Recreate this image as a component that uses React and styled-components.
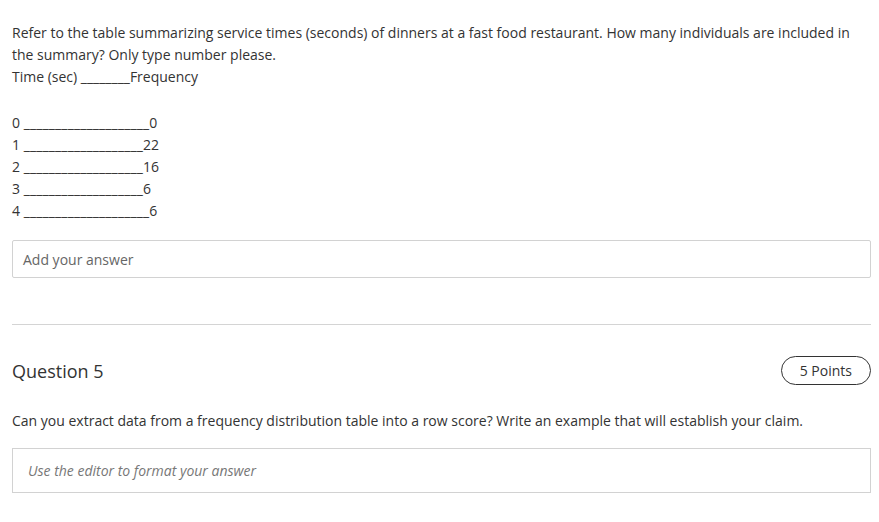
import React from "react";
import styled, { createGlobalStyle } from "styled-components";

const Global = createGlobalStyle`
  html, body { margin: 0; padding: 0; background: #fff; }
  body { font-family: "Open Sans", "Liberation Sans", sans-serif; color: #333; }
`;

const Page = styled.div`
  padding: 22px 8px 30px 12px;
`;

const Prompt = styled.div`
  font-size: 14px;
  line-height: 22px;
  color: #333;
`;

const Table = styled.div`
  margin-top: 24px;
  font-size: 14px;
  line-height: 22px;
  color: #333;
`;

const Row = styled.div`
  white-space: pre;
`;

const Rule = styled.span`
  letter-spacing: 0.15px;
`;

const AnswerInput = styled.div`
  margin-top: 18px;
  height: 38px;
  box-sizing: border-box;
  border: 1px solid #d2d2d2;
  border-radius: 2px;
  display: flex;
  align-items: center;
  padding: 0 10px;
  font-size: 14px;
  color: #666;
`;

const Divider = styled.hr`
  margin: 46px 0 0;
  border: none;
  border-top: 1px solid #d4d4d4;
`;

const QuestionHeader = styled.div`
  margin-top: 31px;
  display: flex;
  align-items: center;
  justify-content: space-between;
`;

const QuestionTitle = styled.div`
  font-size: 18px;
  color: #333;
`;

const Points = styled.div`
  height: 29px;
  box-sizing: border-box;
  border: 1px solid #333;
  border-radius: 15px;
  padding: 0 18px;
  display: flex;
  align-items: center;
  font-size: 14px;
  color: #333;
`;

const QuestionText = styled.div`
  margin-top: 25px;
  font-size: 14px;
  line-height: 22px;
  color: #333;
`;

const Editor = styled.div`
  margin-top: 16px;
  height: 45px;
  box-sizing: border-box;
  border: 1px solid #d2d2d2;
  display: flex;
  align-items: center;
  padding: 0 15px;
  font-size: 14px;
  font-style: italic;
  color: #777;
`;

const rows = [
  ["0", 20, "0"],
  ["1", 19, "22"],
  ["2", 19, "16"],
  ["3", 19, "6"],
  ["4", 20, "6"],
];

export default function App() {
  return (
    <>
      <Global />
      <Page>
        <Prompt>
          Refer to the table summarizing service times (seconds) of dinners at a fast food restaurant. How many individuals are included in the summary? Only type number please.
          <br />
          Time (sec) ________Frequency
        </Prompt>
        <Table>
          {rows.map(([a, n, b]) => (
            <Row key={a}>
              {a} <Rule>{"_".repeat(n)}</Rule>
              {b}
            </Row>
          ))}
        </Table>
        <AnswerInput>Add your answer</AnswerInput>
        <Divider />
        <QuestionHeader>
          <QuestionTitle>Question 5</QuestionTitle>
          <Points>5 Points</Points>
        </QuestionHeader>
        <QuestionText>
          Can you extract data from a frequency distribution table into a row score? Write an example that will establish your claim.
        </QuestionText>
        <Editor>Use the editor to format your answer</Editor>
      </Page>
    </>
  );
}
